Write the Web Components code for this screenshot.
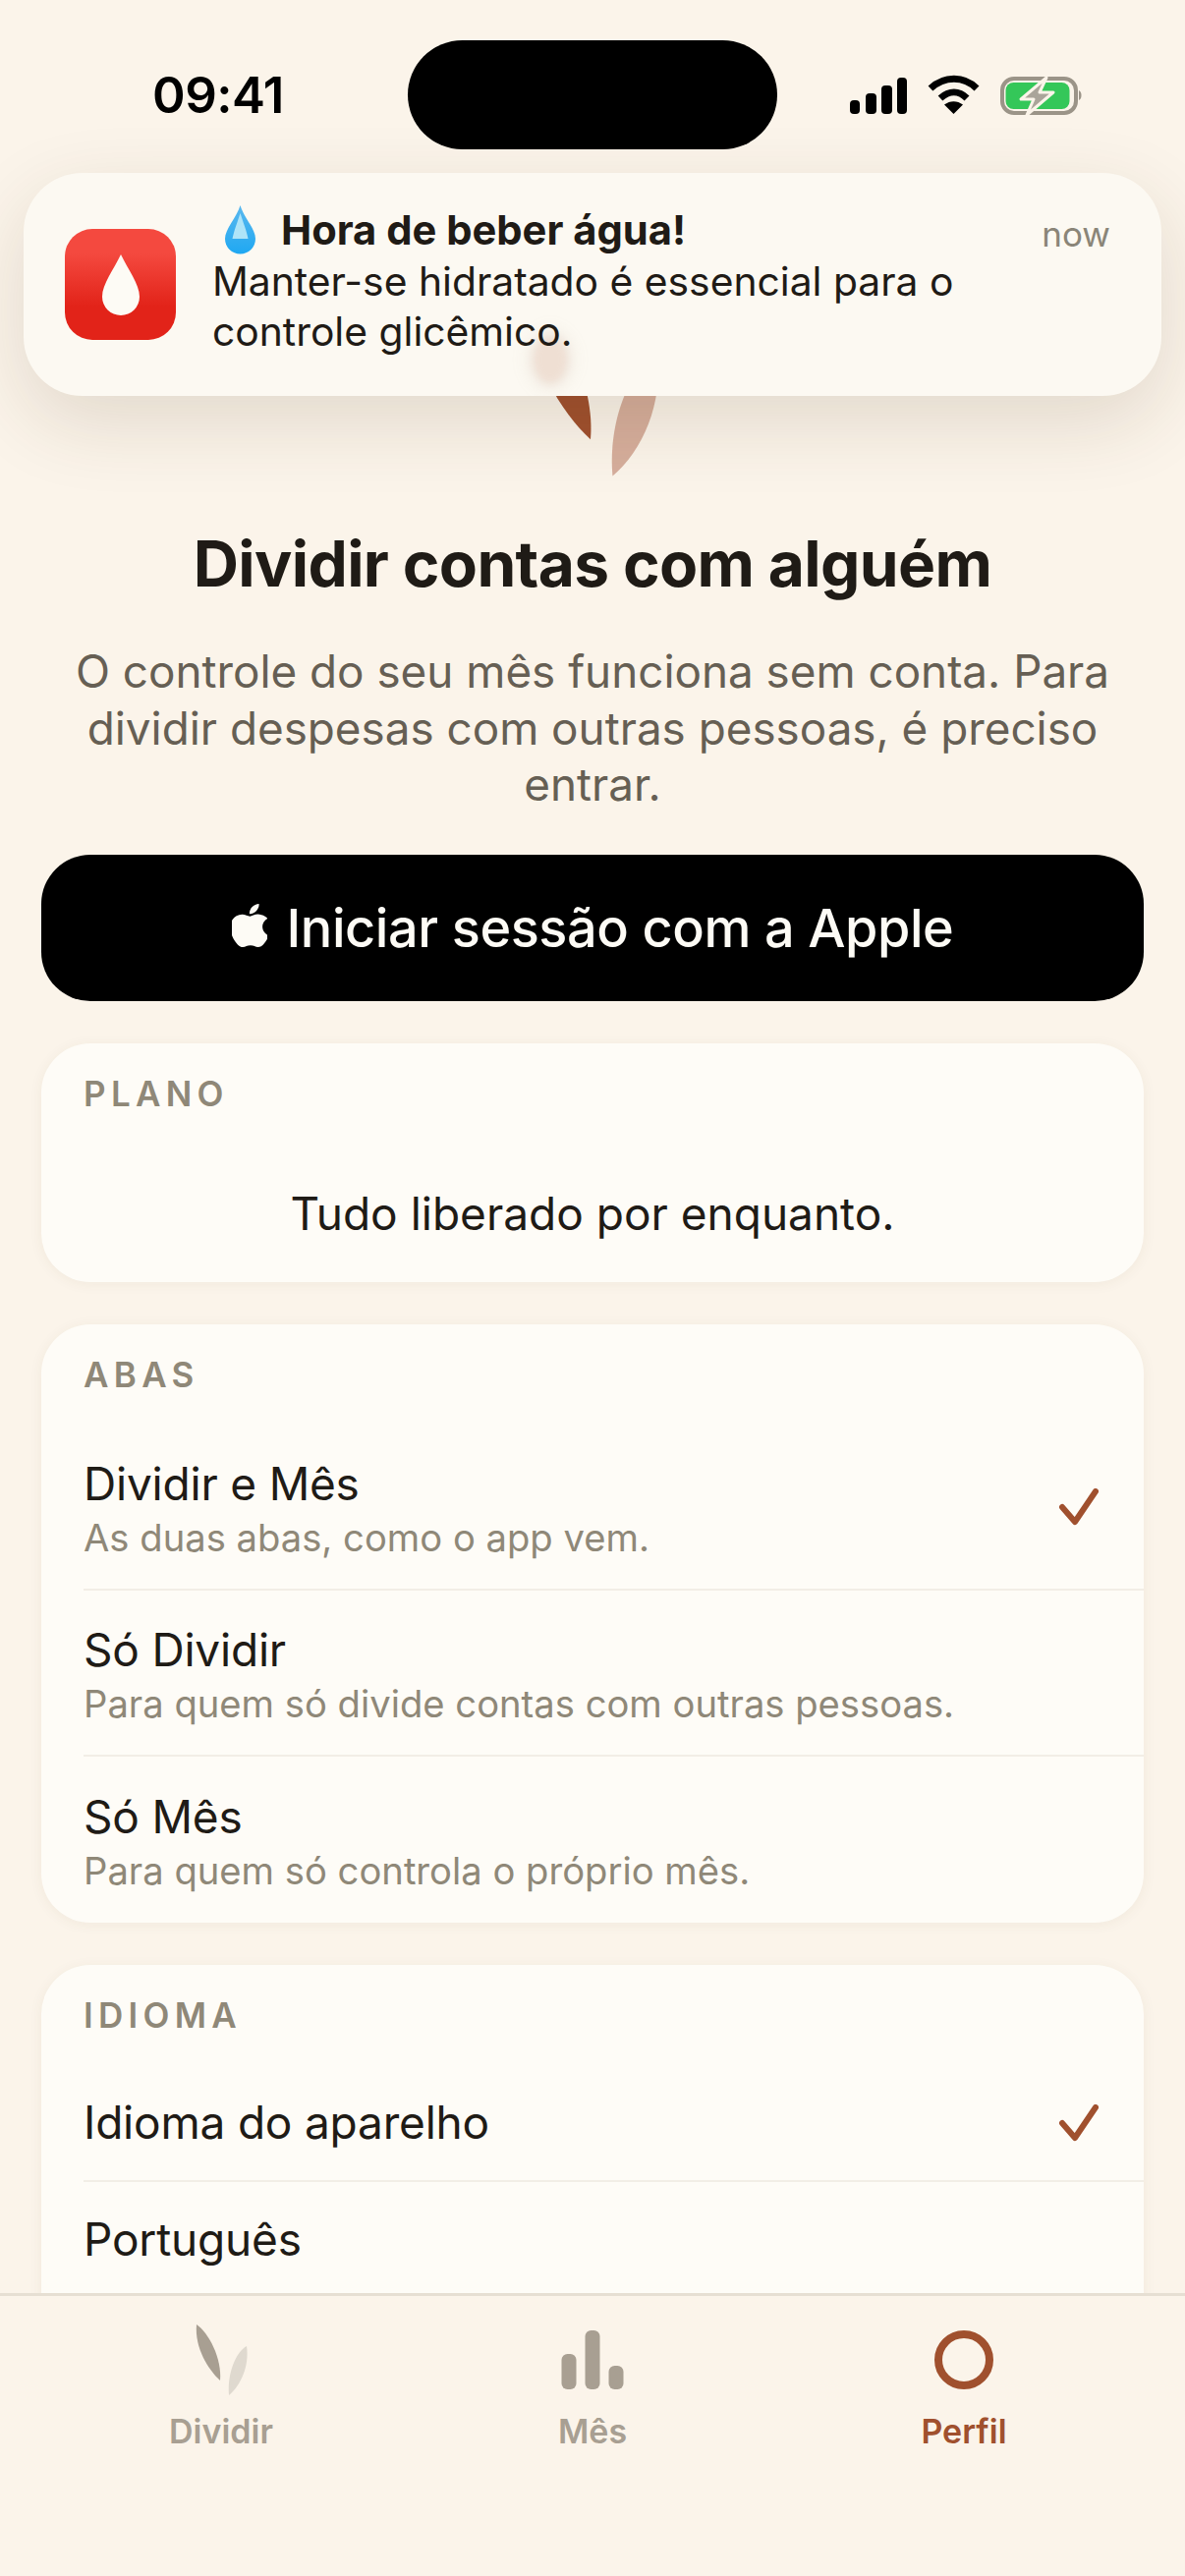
<!DOCTYPE html>
<html lang="pt">
<head>
<meta charset="utf-8">
<title>Perfil</title>
<style>
  html, body { margin: 0; background: #fbf4ea; }
  body { font-family: Inter, "Noto Sans", sans-serif; color: #1f1b16; }
</style>
</head>
<body>
<app-screen>
  <status-bar slot="top"></status-bar>
  <water-notification slot="top"></water-notification>

  <leaf-logo></leaf-logo>
  <intro-text heading="Dividir contas com alguém">O controle do seu mês funciona sem conta. Para dividir despesas com outras pessoas, é preciso entrar.</intro-text>
  <apple-button>Iniciar sessão com a Apple</apple-button>

  <section-card label="PLANO">
    <p style="margin:0;text-align:center;font-size:46px;line-height:56px;padding:43px 0 42px">Tudo liberado por enquanto.</p>
  </section-card>

  <section-card label="ABAS">
    <option-row heading="Dividir e Mês" sub="As duas abas, como o app vem." checked></option-row>
    <option-row heading="Só Dividir" sub="Para quem só divide contas com outras pessoas."></option-row>
    <option-row heading="Só Mês" sub="Para quem só controla o próprio mês." last></option-row>
  </section-card>

  <section-card label="IDIOMA" style="padding-bottom:80px">
    <option-row heading="Idioma do aparelho" checked></option-row>
    <option-row heading="Português"></option-row>
  </section-card>

  <tab-bar slot="bottom">
    <tab-item label="Dividir"><svg width="70" height="85" viewBox="0 0 70 85"><path fill="#a89f92" d="M10 6C22 14 36 40 34 63 22 52 8 30 10 6Z"/><path fill="#dfd9cf" d="M61 28C50 34 41 56 43 78 55 68 64 48 61 28Z"/></svg></tab-item>
    <tab-item label="Mês"><svg width="70" height="85" viewBox="0 0 70 85" fill="#a89f92"><rect x="3.500" y="36" width="15" height="36" rx="6"/><rect x="27.500" y="12" width="15" height="60" rx="6"/><rect x="51.500" y="48" width="15" height="24" rx="6"/></svg></tab-item>
    <tab-item label="Perfil" active><svg width="70" height="85" viewBox="0 0 70 85"><circle cx="35" cy="42" r="26" fill="none" stroke="#a0502e" stroke-width="8"/></svg></tab-item>
  </tab-bar>
</app-screen>

<script>
// Pequeno ajudante: shadow root aberto com o html dado
function abrir(el, html) {
  el.attachShadow({ mode: 'open' }).innerHTML = html;
}

class AppScreen extends HTMLElement {
  constructor() {
    super();
    abrir(this, `
      <style>
        :host { display: flex; flex-direction: column; position: relative; width: 1206px; height: 2622px; overflow: hidden; background: #fbf4ea; }
        main { flex: 1; min-height: 0; overflow: hidden; display: flex; flex-direction: column; gap: 43px; padding: 170px 42px 0; }
      </style>
      <slot name="top"></slot>
      <main><slot></slot></main>
      <slot name="bottom"></slot>
    `);
  }
}

class StatusBar extends HTMLElement {
  constructor() {
    super();
    abrir(this, `
      <style>
        :host { display: grid; grid-template-columns: 415px 376px 1fr; height: 120px; align-items: start; }
        .hora { font: 600 51px/56px Inter, sans-serif; color: #000; padding: 69px 0 0 155px; letter-spacing: -.5px; }
        .ilha { width: 376px; height: 111px; margin-top: 41px; border-radius: 56px; background: #000; }
        .icones { display: flex; padding: 76px 0 0 74px; }
        svg { display: block; }
      </style>
      <div class="hora">09:41</div>
      <div class="ilha"></div>
      <div class="icones">
        <svg width="240" height="44" viewBox="0 0 240 44">
          <g fill="#000">
            <rect x="0" y="26" width="10" height="14" rx="4"/>
            <rect x="16" y="19" width="11" height="21" rx="4"/>
            <rect x="32" y="11" width="11" height="29" rx="4"/>
            <rect x="48" y="3" width="10" height="37" rx="4"/>
          </g>
          <path fill="none" stroke="#000" stroke-width="7" d="M82 14C96 1 116 1 129 14"/>
          <path fill="none" stroke="#000" stroke-width="7" d="M92 24C101 16 111 16 119 24"/>
          <path fill="#000" d="M105.500 40 96 30.500C102 26 109 26 115 30.500Z"/>
          <rect x="155" y="4" width="75" height="35" rx="12" fill="none" stroke="#9b9488" stroke-width="4"/>
          <rect x="158.500" y="8" width="65" height="27" rx="8" fill="#34c759"/>
          <path d="M233 16c2 1 2.500 3 2.500 5s-.5 4-2.500 5Z" fill="#9b9488"/>
          <path d="M200 3 174 25h13l-7 16 27-23h-14Z" fill="#aaa49a" stroke="#fbf4ea" stroke-width="3" stroke-linejoin="round"/>
        </svg>
      </div>
    `);
  }
}

class WaterNotification extends HTMLElement {
  constructor() {
    super();
    abrir(this, `
      <style>
        :host { display: block; position: absolute; left: 24px; top: 176px; width: 1158px; height: 227px; z-index: 5; border-radius: 60px; background: #fcf9f2; box-shadow: 0 26px 80px rgba(70,50,20,.14); overflow: visible; }
        .caixa { position: relative; display: flex; height: 100%; border-radius: 60px; overflow: hidden; }
        .fantasma { position: absolute; left: 518px; top: 165px; width: 36px; height: 50px; border-radius: 50%; background: rgba(214,170,150,.33); box-shadow: 0 0 14px 6px rgba(170,160,140,.12); filter: blur(4px); }
        .app { flex: none; width: 113px; height: 113px; margin: 57px 37px 0 42px; border-radius: 28px; background: linear-gradient(#f4493f 22%, #e22319 70%); display: flex; align-items: center; justify-content: center; position: relative; }
        .texto { position: relative; flex: 1; padding-top: 31px; font-size: 40.800px; line-height: 51px; color: #1f1b16; }
        .titulo { display: flex; align-items: center; font-size: 41.700px; font-weight: 700; gap: 26px; margin-left: 13px; height: 54px; }
        .agora { position: absolute; right: 52px; top: 40px; font-size: 35px; line-height: 44px; color: #8a8578; }
        p { margin: 0; width: 800px; }
        svg { display: block; }
      </style>
      <div class="caixa">
        <div class="fantasma"></div>
        <div class="app">
          <svg width="38" height="62" viewBox="0 0 38 62"><path fill="#fdfbf5" d="M19 0C26 15 38 30 38 43a19 19 0 0 1-38 0C0 30 12 15 19 0Z"/></svg>
        </div>
        <div class="texto">
          <div class="titulo">
            <svg width="31" height="50" viewBox="0 0 31 50">
              <defs><linearGradient id="g" x1="0" y1="0" x2="0" y2="1"><stop offset="0" stop-color="#5ab8ee"/><stop offset="1" stop-color="#1fa8f2"/></linearGradient></defs>
              <path fill="url(#g)" d="M15.500 0C19 12 31 24 31 34a15.500 15.500 0 0 1-31 0C0 24 12 12 15.500 0Z"/>
              <path fill="#aee4f8" d="M15.500 8C18 16 22 26 23.500 34H7.500C9 26 13 16 15.500 8Z"/>
            </svg>
            <span>Hora de beber água!</span>
          </div>
          <p>Manter-se hidratado é essencial para o controle glicêmico.</p>
          <span class="agora">now</span>
        </div>
      </div>
    `);
  }
}

class LeafLogo extends HTMLElement {
  constructor() {
    super();
    abrir(this, `
      <style>
        :host { display: flex; justify-content: center; height: 212px; margin-bottom: -43px; }
      </style>
      <svg width="175" height="212" viewBox="0 0 70 85">
        <path fill="#a0502e" d="M10 6C22 14 36 40 34 63 22 52 8 30 10 6Z"/>
        <path fill="#d6ae9c" d="M61 28C50 34 41 56 43 78 55 68 64 48 61 28Z"/>
      </svg>
    `);
  }
}

class IntroText extends HTMLElement {
  constructor() {
    super();
    abrir(this, `
      <style>
        :host { display: block; text-align: center; padding-top: 34px; margin-bottom: -1px; }
        h1 { margin: 0 0 43px; font-size: 64px; line-height: 76px; font-weight: 700; color: #1f1b16; letter-spacing: -.65px; }
        p { margin: 0; font-size: 45.800px; line-height: 57.500px; color: #665f54; }
      </style>
      <h1></h1>
      <p><slot></slot></p>
    `);
    this.shadowRoot.querySelector('h1').textContent = this.getAttribute('heading');
  }
}

class AppleButton extends HTMLElement {
  constructor() {
    super();
    abrir(this, `
      <style>
        :host { display: flex; flex: none; height: 149px; border-radius: 50px; background: #000; color: #fdfbf5; align-items: center; justify-content: center; gap: 20px; font-size: 54px; font-weight: 500; letter-spacing: -.42px; }
        svg { display: block; margin-top: -4px; }
      </style>
      <svg width="36" height="44" viewBox="3 0 18 24" preserveAspectRatio="none"><path fill="#fdfbf5" d="M12.152 6.896c-.948 0-2.415-1.078-3.96-1.04-2.04.027-3.91 1.183-4.961 3.014-2.117 3.675-.546 9.103 1.519 12.09 1.013 1.454 2.208 3.09 3.792 3.039 1.52-.065 2.09-.987 3.935-.987 1.831 0 2.35.987 3.96.948 1.637-.026 2.676-1.48 3.676-2.948 1.156-1.688 1.636-3.325 1.662-3.415-.039-.013-3.182-1.221-3.22-4.857-.026-3.04 2.48-4.494 2.597-4.559-1.429-2.09-3.623-2.324-4.39-2.376-2-.156-3.675 1.09-4.61 1.09zM15.53 3.83c.843-1.012 1.4-2.427 1.245-3.83-1.207.052-2.662.805-3.532 1.818-.78.896-1.454 2.338-1.273 3.714 1.338.104 2.715-.688 3.559-1.701"/></svg>
      <span><slot></slot></span>
    `);
  }
}

class SectionCard extends HTMLElement {
  constructor() {
    super();
    abrir(this, `
      <style>
        :host { display: block; flex: none; border-radius: 50px; background: #fefcf7; box-shadow: 0 2px 14px rgba(90,60,30,.06); font-size: 46px; color: #1f1b16; }
        .rotulo { padding-left: 43px; height: 102px; line-height: 102px; font-size: 35px; font-weight: 600; letter-spacing: 5.300px; color: #8f8878; }
      </style>
      <div class="rotulo"></div>
      <slot></slot>
    `);
    this.shadowRoot.querySelector('.rotulo').textContent = this.getAttribute('label');
  }
}

class OptionRow extends HTMLElement {
  constructor() {
    super();
    const sub = this.getAttribute('sub');
    abrir(this, `
      <style>
        :host { display: block; padding-left: 43px; }
        .linha { display: flex; align-items: center; justify-content: space-between; box-sizing: border-box; height: ${sub ? 169 : 119}px; border-bottom: 2px solid #f2eee6; padding-right: 46px; }
        :host([last]) .linha { border-bottom: 0; }
        .nome { font-size: 46px; line-height: 56px; letter-spacing: -.2px; }
        .sub { font-size: 38.200px; line-height: 54px; color: #8f8878; }
        .texto.com-sub { padding-top: 7px; }
        svg { display: block; flex: none; margin-top: 2px; }
      </style>
      <div class="linha">
        <div class="texto ${sub ? 'com-sub' : ''}">
          <div class="nome"></div>
          ${sub ? '<div class="sub"></div>' : ''}
        </div>
        ${this.hasAttribute('checked') ? '<svg width="40" height="38" viewBox="0 0 40 38"><path d="M3 19 16 34 37 3" fill="none" stroke="#a0502e" stroke-width="6" stroke-linecap="round" stroke-linejoin="round"/></svg>' : ''}
      </div>
    `);
    this.shadowRoot.querySelector('.nome').textContent = this.getAttribute('heading');
    if (sub) this.shadowRoot.querySelector('.sub').textContent = sub;
  }
}

class TabBar extends HTMLElement {
  constructor() {
    super();
    abrir(this, `
      <style>
        :host { display: grid; grid-template-columns: repeat(3, 1fr); flex: none; position: relative; z-index: 2; box-sizing: border-box; height: 288px; padding: 23px 36px 0; background: #fbf4ea; border-top: 3px solid #e6dfd3; }
      </style>
      <slot></slot>
    `);
  }
}

class TabItem extends HTMLElement {
  constructor() {
    super();
    abrir(this, `
      <style>
        :host { display: flex; flex-direction: column; align-items: center; font-size: 34px; font-weight: 600; color: #a89f92; }
        :host([active]) { color: #a0502e; }
        span { line-height: 40px; margin-top: 10px; }
        ::slotted(svg) { display: block; }
      </style>
      <slot></slot>
      <span></span>
    `);
    this.shadowRoot.querySelector('span').textContent = this.getAttribute('label');
  }
}

customElements.define('app-screen', AppScreen);
customElements.define('status-bar', StatusBar);
customElements.define('water-notification', WaterNotification);
customElements.define('leaf-logo', LeafLogo);
customElements.define('intro-text', IntroText);
customElements.define('apple-button', AppleButton);
customElements.define('section-card', SectionCard);
customElements.define('option-row', OptionRow);
customElements.define('tab-bar', TabBar);
customElements.define('tab-item', TabItem);
</script>
</body>
</html>
